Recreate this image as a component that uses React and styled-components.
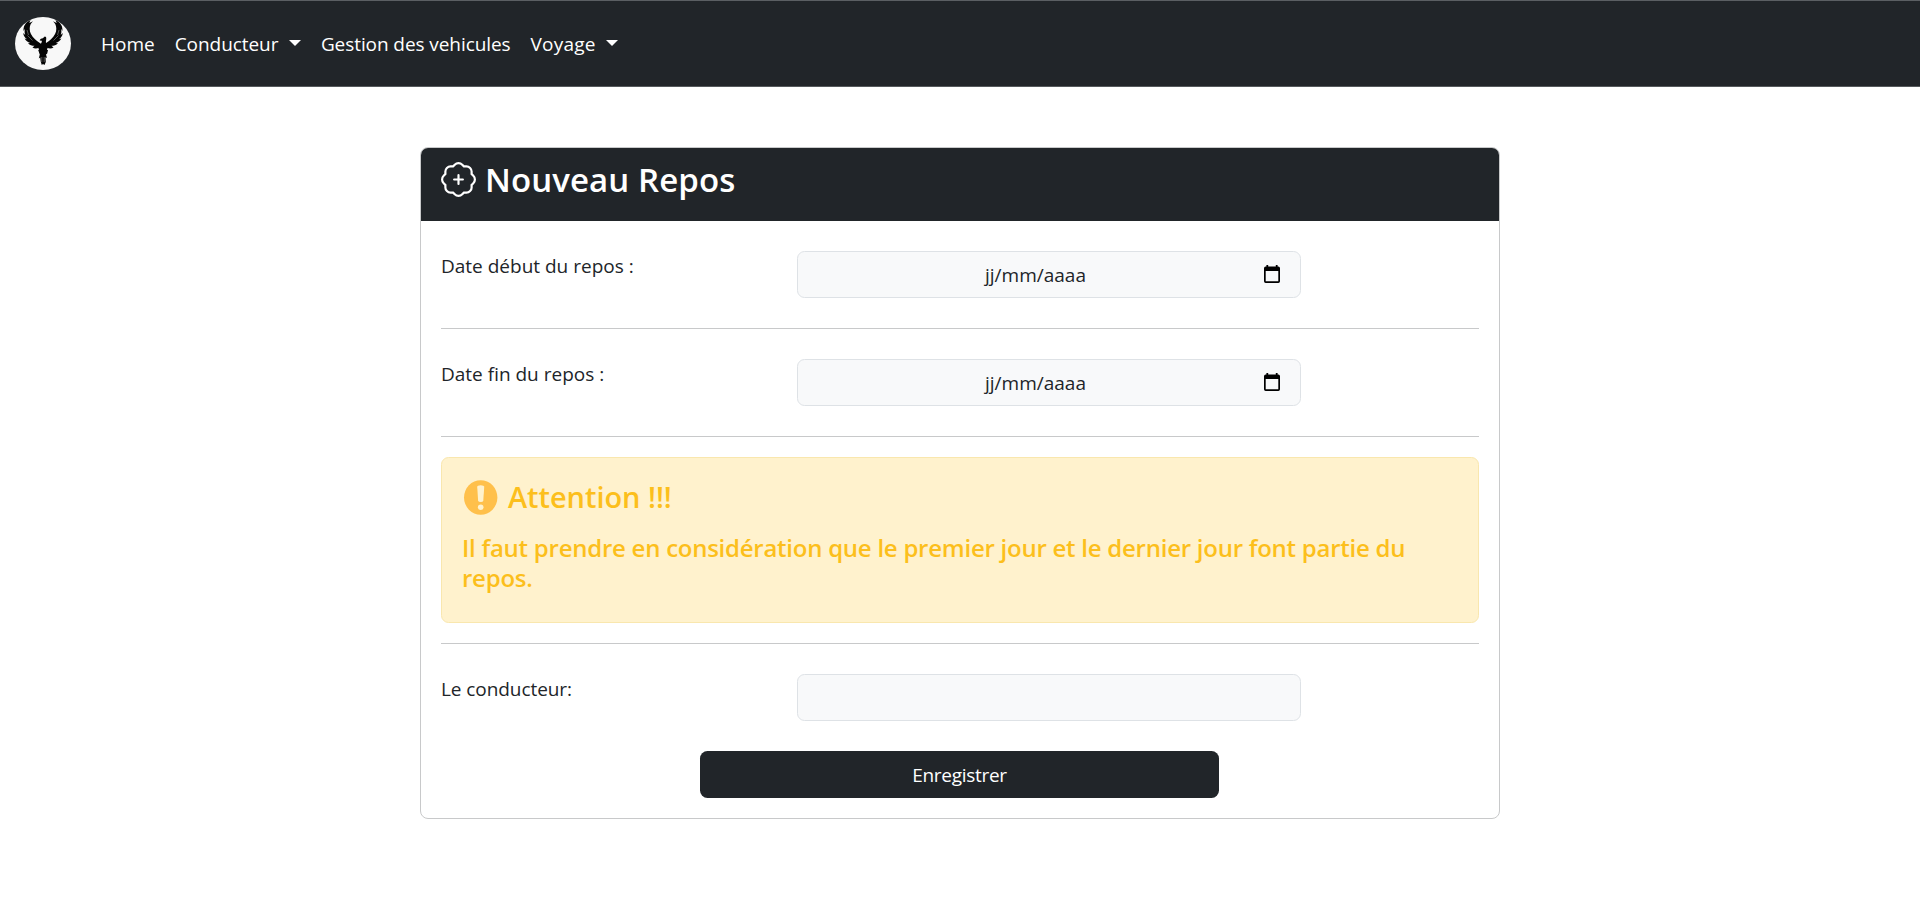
import React from "react";
import styled, { createGlobalStyle } from "styled-components";
import { BsPatchPlus } from "react-icons/bs";

const GlobalStyle = createGlobalStyle`
  *, *::before, *::after { box-sizing: border-box; }
  body {
    margin: 0;
    background: #fff;
    color: #212529;
    font-family: "Open Sans", "Noto Sans", sans-serif;
    font-size: 19px;
    line-height: 30px;
  }
`;

const Navbar = styled.nav`
  display: flex;
  align-items: center;
  height: 87px;
  padding: 0 15px;
  background: #212529;
  border-top: 1px solid #5b5f63;
  border-bottom: 1px solid #55595c;
`;

const Brand = styled.a`
  display: flex;
  margin-right: 20px;
`;

const NavList = styled.ul`
  display: flex;
  margin: 0;
  padding: 0;
  list-style: none;
`;

const NavLink = styled.a`
  display: flex;
  align-items: center;
  padding: 0 10px;
  color: #fff;
  letter-spacing: ${(p) => p.$spacing || "0"};
  white-space: nowrap;
`;

const Caret = styled.span`
  margin: 0 0 1px 10.5px;
  border-top: 6px solid #fff;
  border-left: 6px solid transparent;
  border-right: 6px solid transparent;
`;

const Card = styled.section`
  width: 1080px;
  margin: 60px auto 0;
  background: #fff;
  border: 1px solid #c8c9ca;
  border-radius: 8px;
  overflow: hidden;
`;

const CardHeader = styled.header`
  display: flex;
  align-items: flex-start;
  height: 73px;
  padding: 10px 20px;
  background: #212529;
  color: #fff;

  svg {
    margin-top: 4px;
  }
`;

const Title = styled.h1`
  margin: 1px 0 0 9px;
  font-size: 33px;
  font-weight: 600;
  line-height: 42px;
  letter-spacing: 0.09px;
`;

const CardBody = styled.form`
  display: flex;
  flex-direction: column;
  padding: 0 20px 20px;
`;

const Row = styled.div`
  display: grid;
  grid-template-columns: 356px 504px;
  align-items: start;
  padding: 30px 0;
`;

const Label = styled.label`
  letter-spacing: ${(p) => p.$spacing || "0"};
`;

const Field = styled.div`
  display: flex;
  align-items: center;
  height: 47px;
  padding: 0 20px 0 15px;
  background: #f8f9fa;
  border: 1px solid #dee2e6;
  border-radius: 7.5px;

  svg {
    margin-bottom: 2px;
  }
`;

const DateText = styled.span`
  flex: 1;
  margin-right: 6px;
  text-align: center;
`;

const Divider = styled.hr`
  width: 100%;
  height: 1px;
  margin: 0;
  border: 0;
  background: #c8c9ca;
`;

const Alert = styled.div`
  height: 166px;
  margin: 20px 0;
  padding: 20px;
  background: #fff2cd;
  border: 1px solid #f9e7ae;
  border-radius: 7.5px;
  color: #fcbf1c;
  font-weight: 600;
`;

const AlertTitle = styled.h4`
  display: flex;
  align-items: center;
  height: 37px;
  margin: 0 0 18px;
  font-size: 29px;
  font-weight: 600;
  line-height: 36px;
  letter-spacing: -0.05px;

  svg {
    margin: 1px 10px 0 1px;
  }
`;

const AlertText = styled.p`
  margin: 0;
  font-size: 24px;
  line-height: 30px;
  letter-spacing: -0.25px;
`;

const SubmitButton = styled.button`
  width: 519px;
  height: 47px;
  margin-left: 259px;
  padding: 0;
  background: #212529;
  border: 0;
  border-radius: 7.5px;
  color: #fff;
  font: inherit;
  letter-spacing: -0.28px;
`;

function PhoenixLogo() {
  return (
    <svg width="56" height="53" viewBox="0 0 56 53">
      <rect width="56" height="53" rx="28" ry="26.5" fill="#f8f8f8" />
      <g fill="#050505">
        <path d="M15.5 3C10.5 5.2 8 9.5 8.6 14L10 11.8C9.3 14.5 9.6 16.3 10.3 18L8.2 16C8.5 18.8 9.8 20.6 12 22.2L9.6 21.6C10.8 23.9 12.7 25.2 15.3 26L13 26.2C14.8 28 17 28.8 19.5 28.8L17.5 30.6C19.5 31.8 22 31.6 24 30.8L26 34H28V28.5C26 26.5 22.5 24.6 20 22.2C16.5 18.8 14.5 15.5 14.7 11.5C14.8 8 16 6 18 4.2L14.3 6Z" />
        <path d="M40.5 3C45.5 5.2 48 9.5 47.4 14L46 11.8C46.7 14.5 46.4 16.3 45.7 18L47.8 16C47.5 18.8 46.2 20.6 44 22.2L46.4 21.6C45.2 23.9 43.3 25.2 40.7 26L43 26.2C41.2 28 39 28.8 36.5 28.8L38.5 30.6C36.5 31.8 34 31.6 32 30.8L30 34H28V28.5C30 26.5 33.5 24.6 36 22.2C39.5 18.8 41.5 15.5 41.3 11.5C41.2 8 40 6 38 4.2L41.7 6Z" />
        <path d="M25.3 28C26.5 26 27 24.8 26.8 23.8L24.6 23.6C25.2 21.9 26.5 21.3 27.8 21.2L29.8 19.4 31 20.1C31.7 21.8 30.8 23.8 30.9 25.5L33 29 31 37H25L23.3 30.5Z" />
        <path d="M23.2 33H33L32.2 36.5 31 37.5 32 41 30.5 40.3 30.8 45 29.5 48 28 47 26.8 48 25.7 44.5 25.2 40.5 23.8 41.5 24.8 37.5Z" />
      </g>
      <g stroke="#eee" strokeWidth=".35" fill="none">
        <path d="M12 13 13.5 18M12.5 18.5 17.5 23.5M44 13 42.5 18M43.5 18.5 38.5 23.5M26.8 40V45M29.2 40V45" />
      </g>
    </svg>
  );
}

function CalendarIcon() {
  return (
    <svg width="16" height="18" viewBox="0 0 16 18">
      <path
        fill="#000"
        fillRule="evenodd"
        d="M2.4 0H4.2V1.6H11.8V0H13.6V1.6H14.3Q16 1.6 16 3.3V16.2Q16 17.9 14.3 17.9H1.7Q0 17.9 0 16.2V3.3Q0 1.6 1.7 1.6H2.4ZM1.7 6V16.2H14.3V6Z"
      />
    </svg>
  );
}

function WarningIcon() {
  return (
    <svg width="35" height="35" viewBox="0 0 35 35">
      <ellipse cx="17.7" cy="17.5" rx="16.7" ry="17.2" fill="#ffc04b" />
      <path d="M14.2 6.8Q14.2 5.2 17.7 5.2T21.2 6.8L20.3 20.5Q20.1 22 17.7 22T15.1 20.5Z" fill="#fff2cd" />
      <circle cx="17.7" cy="27.3" r="2.8" fill="#fff2cd" />
    </svg>
  );
}

function DateRow({ label }) {
  return (
    <Row>
      <Label>{label}</Label>
      <Field>
        <DateText>jj/mm/aaaa</DateText>
        <CalendarIcon />
      </Field>
    </Row>
  );
}

export default function App() {
  return (
    <>
      <GlobalStyle />
      <Navbar>
        <Brand>
          <PhoenixLogo />
        </Brand>
        <NavList>
          <li><NavLink>Home</NavLink></li>
          <li><NavLink $spacing="-0.06px">Conducteur<Caret /></NavLink></li>
          <li><NavLink $spacing="-0.08px">Gestion des vehicules</NavLink></li>
          <li><NavLink $spacing="0.2px">Voyage<Caret /></NavLink></li>
        </NavList>
      </Navbar>
      <Card>
        <CardHeader>
          <BsPatchPlus size={35} />
          <Title>Nouveau Repos</Title>
        </CardHeader>
        <CardBody>
          <DateRow label="Date début du repos :" />
          <Divider />
          <DateRow label="Date fin du repos :" />
          <Divider />
          <Alert>
            <AlertTitle>
              <WarningIcon />
              Attention !!!
            </AlertTitle>
            <AlertText>
              Il faut prendre en considération que le premier jour et le dernier jour font partie du repos.
            </AlertText>
          </Alert>
          <Divider />
          <Row>
            <Label $spacing="-0.07px">Le conducteur:</Label>
            <Field />
          </Row>
          <SubmitButton type="button">Enregistrer</SubmitButton>
        </CardBody>
      </Card>
    </>
  );
}
